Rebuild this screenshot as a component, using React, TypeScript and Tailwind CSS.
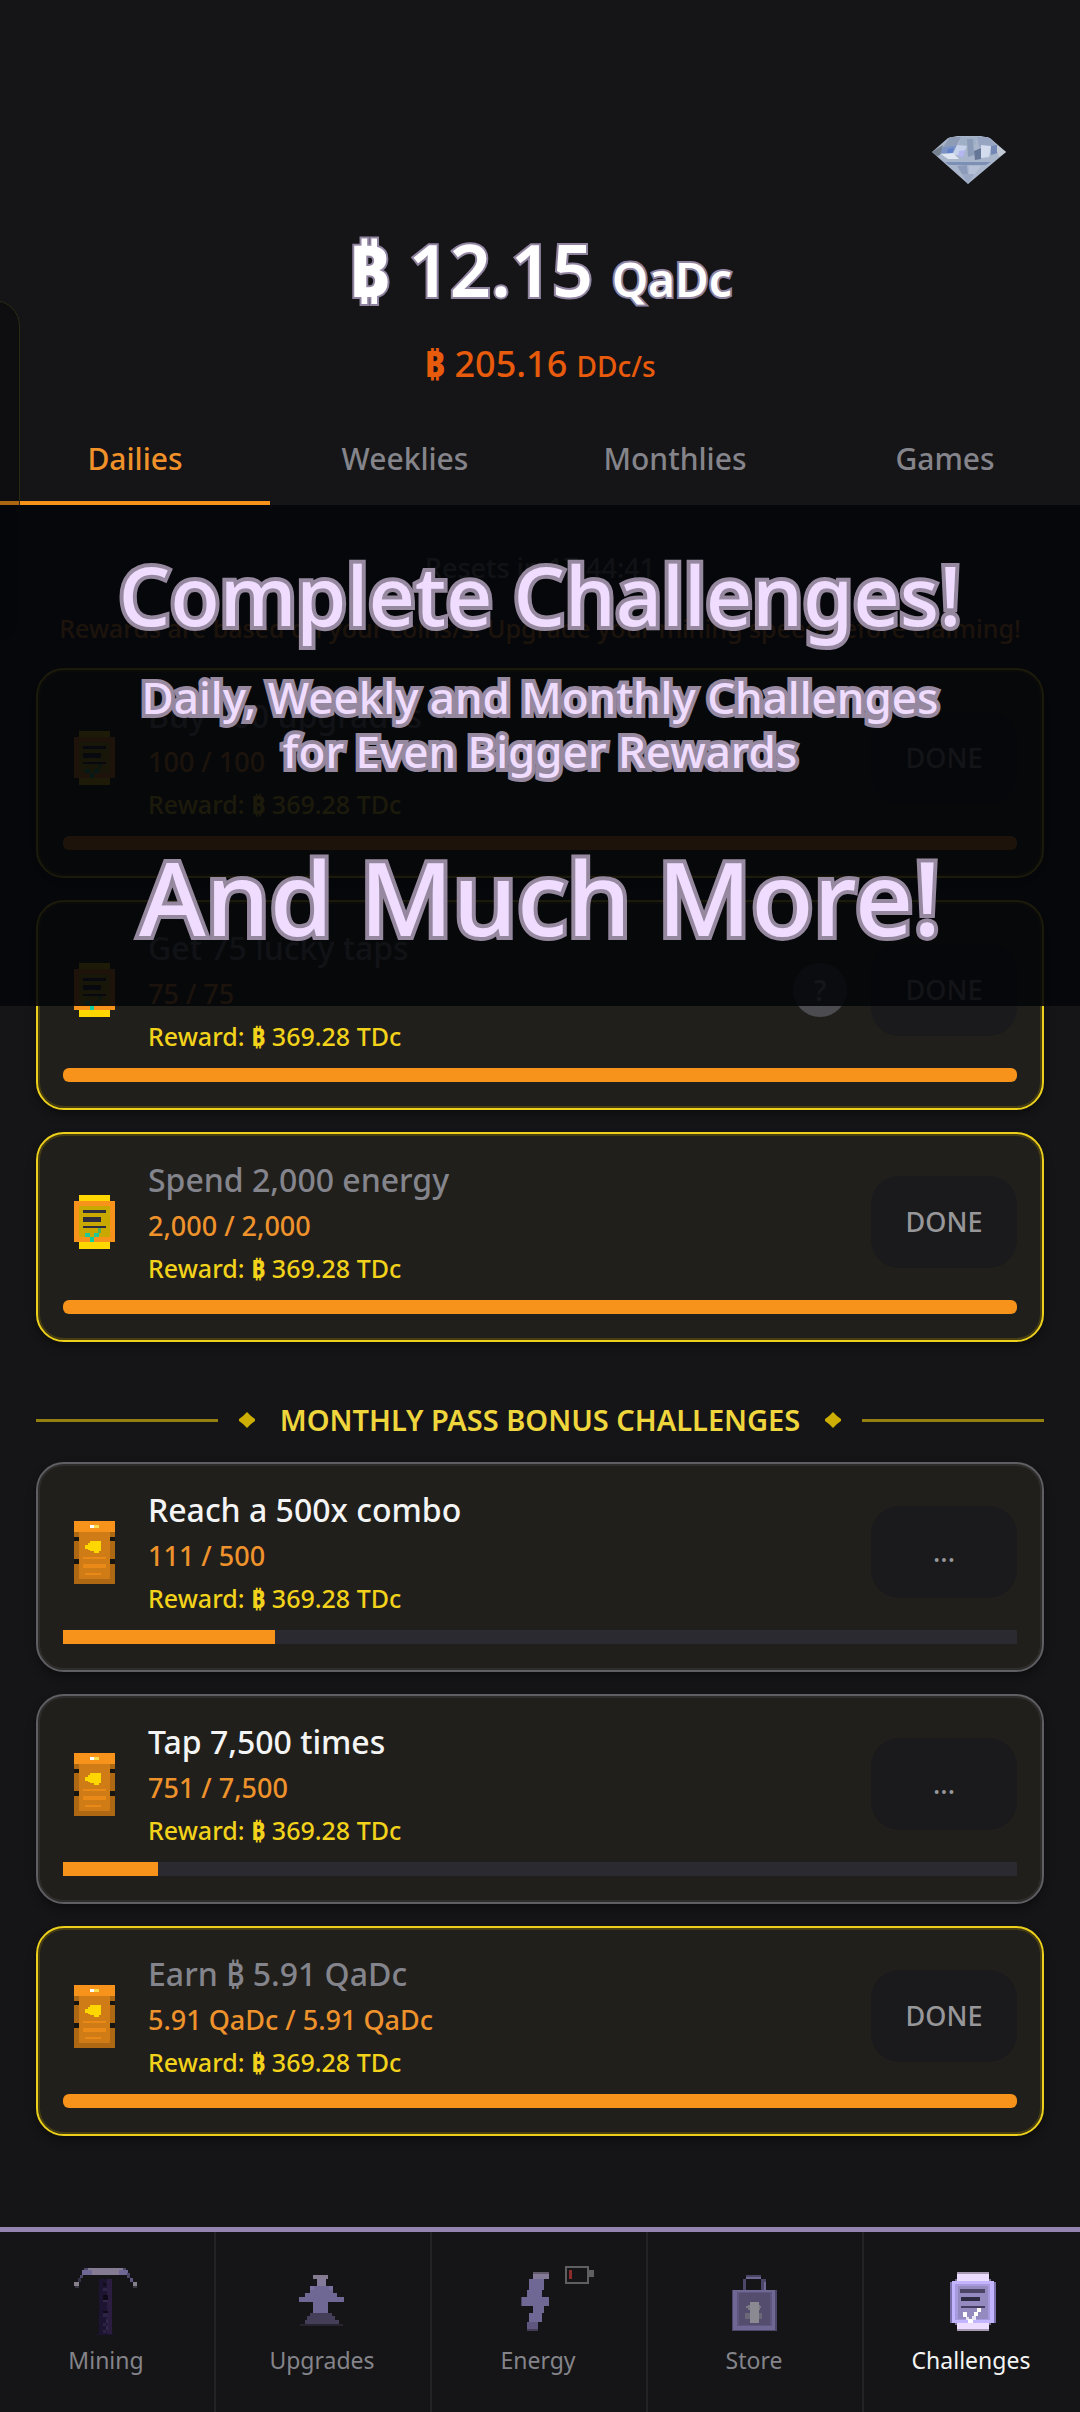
import React from "react";

type Rect = [number, number, number, number, string];

function PixelArt({ w, h, rects, label }: { w: number; h: number; rects: Rect[]; label?: string }) {
  return (
    <svg
      width={w}
      height={h}
      viewBox={`0 0 ${w} ${h}`}
      shapeRendering="crispEdges"
      role={label ? "img" : undefined}
      aria-label={label}
      aria-hidden={label ? undefined : true}
      className="shrink-0"
    >
      {rects.map(([x1, y1, x2, y2, fill], i) => (
        <rect key={i} x={x1} y={y1} width={x2 - x1} height={y2 - y1} fill={fill} />
      ))}
    </svg>
  );
}

const SCROLL: Rect[] = [
  [5, 0, 36, 54, "#ffd700"],
  [0, 6, 41, 47, "#f7931a"],
  [5, 11, 36, 42, "#c9a800"],
  [9, 15, 32, 18, "#2c2c3c"],
  [9, 22, 27, 27, "#2c2c3c"],
  [9, 31, 32, 33, "#2c2c3c"],
  [11, 38, 16, 42, "#1fc894"],
  [16, 42, 20, 47, "#0fd09c"],
  [20, 38, 25, 42, "#1fc894"],
  [24, 33, 27, 38, "#4eb15c"],
];

const BOOK: Rect[] = [
  [0, 0, 41, 63, "#ae6813"],
  [5, 11, 36, 58, "#cf7c17"],
  [0, 0, 41, 11, "#f7931a"],
  [16, 4, 20, 7, "#ffffff"],
  [20, 4, 25, 7, "#ffdf4d"],
  [0, 16, 5, 20, "#15140f"],
  [36, 16, 41, 20, "#15140f"],
  [0, 38, 5, 43, "#15140f"],
  [36, 38, 41, 43, "#15140f"],
  [11, 24, 27, 28, "#ffd700"],
  [14, 22, 27, 29, "#ffd700"],
  [16, 20, 27, 30, "#ffd700"],
  [20, 30, 25, 32, "#ffd700"],
  [9, 36, 32, 38, "#e88918"],
  [9, 43, 32, 47, "#e88918"],
  [11, 52, 27, 54, "#e88918"],
];

const PICKAXE: Rect[] = [
  [14, 2, 56, 4, "#4c4668"],
  [18, 2, 53, 4, "#857b92"],
  [12, 4, 58, 9, "#6f6794"],
  [22, 4, 49, 9, "#857b92"],
  [10, 9, 13, 12, "#4c4668"],
  [8, 12, 11, 16, "#353248"],
  [57, 7, 60, 12, "#4c4668"],
  [60, 12, 63, 16, "#5d5680"],
  [4, 16, 9, 20, "#85808c"],
  [5, 20, 9, 22, "#3a3740"],
  [63, 16, 67, 20, "#85808c"],
  [63, 20, 67, 22, "#3a3740"],
  [29, 13, 42, 69, "#1c1430"],
  [37, 13, 42, 69, "#2a1d40"],
  [33, 17, 36, 20, "#120d1c"],
  [33, 22, 37, 25, "#2c2345"],
  [33, 29, 38, 34, "#0e0a16"],
  [33, 34, 38, 36, "#32294a"],
  [33, 45, 38, 47, "#0e0a16"],
  [33, 47, 38, 51, "#2c2345"],
  [36, 53, 38, 57, "#322a4c"],
  [33, 57, 36, 60, "#2c2345"],
  [36, 60, 38, 64, "#322a4c"],
  [33, 64, 36, 67, "#2c2345"],
  [25, 68, 44, 69, "#1c1430"],
];

const UPGRADE: Rect[] = [
  [27, 9, 42, 13, "#847b90"],
  [31, 13, 40, 20, "#847a9a"],
  [24, 20, 47, 24, "#7a71a0"],
  [28, 20, 43, 27, "#6f6794"],
  [24, 24, 47, 27, "#6f6794"],
  [19, 27, 51, 31, "#6f6794"],
  [13, 31, 58, 36, "#6f6794"],
  [27, 36, 42, 47, "#6f6794"],
  [24, 47, 46, 50, "#453e58"],
  [21, 50, 49, 54, "#453e58"],
  [19, 54, 53, 58, "#453e58"],
  [14, 58, 57, 60, "#28242f"],
];

const BOLT: Rect[] = [
  [31, 6, 47, 8, "#625a6c"],
  [31, 8, 47, 13, "#847a98"],
  [27, 13, 42, 24, "#6f6794"],
  [25, 24, 40, 31, "#6f6794"],
  [19, 31, 22, 40, "#4c4668"],
  [20, 31, 47, 40, "#6f6794"],
  [31, 40, 42, 47, "#6f6794"],
  [27, 47, 40, 56, "#6f6794"],
  [25, 56, 36, 63, "#5f5780"],
  [25, 63, 36, 65, "#423c55"],
];

const STORE: Rect[] = [
  [28, 9, 43, 11, "#4a4462"],
  [28, 11, 43, 13, "#6f6794"],
  [25, 13, 28, 24, "#4c4668"],
  [43, 13, 48, 24, "#4c4668"],
  [46, 16, 48, 24, "#6f6794"],
  [14, 24, 59, 65, "#4c4668"],
  [15, 24, 57, 64, "#6f6794"],
  [19, 26, 54, 60, "#5f5780"],
  [21, 27, 52, 59, "#544d6e"],
  [27, 47, 44, 53, "#6d6878"],
  [28, 40, 43, 42, "#7c7884"],
  [30, 39, 42, 44, "#7c7884"],
  [32, 36, 41, 57, "#8b8a92"],
];

const CHALLENGE: Rect[] = [
  [20, 13, 56, 59, "#7a7192"],
  [22, 6, 54, 65, "#a99bb3"],
  [22, 8, 54, 63, "#ecdcff"],
  [15, 16, 61, 57, "#7a6fa8"],
  [17, 15, 59, 57, "#c3b4ff"],
  [20, 18, 55, 54, "#a99ae0"],
  [23, 20, 53, 53, "#958ac0"],
  [25, 23, 50, 27, "#4b4465"],
  [26, 31, 45, 35, "#2c2a40"],
  [26, 40, 50, 42, "#453e60"],
  [28, 46, 32, 51, "#ffffff"],
  [31, 51, 34, 54, "#e8e4f4"],
  [33, 53, 38, 57, "#ffffff"],
  [37, 50, 41, 54, "#e8e4f4"],
  [39, 46, 43, 50, "#ffffff"],
  [42, 42, 46, 46, "#ffffff"],
];

const BATTERY: Rect[] = [
  [0, 0, 24, 18, "#5f5f61"],
  [2, 2, 22, 16, "#151517"],
  [24, 4, 29, 11, "#5f5f61"],
  [4, 4, 7, 13, "#8c2b2b"],
];

function Diamond() {
  return (
    <svg width="76" height="50" viewBox="0 0 76 50" role="img" aria-label="Diamond">
      <path d="M17 3 L26 1 L50 1 L59 3 L75 17 L37 49 L1 17 Z" fill="#a9b5cb" />
      <path d="M19 2 L30 2 L26 10 L12 12 Z" fill="#8e9bb5" />
      <path d="M30 2 L46 2 L44 10 L28 10 Z" fill="#9fb0c6" />
      <path d="M46 2 L57 2 L66 11 L48 12 Z" fill="#97a5c2" />
      <path d="M12 12 L26 10 L22 20 L8 18 Z" fill="#7d92c4" />
      <path d="M1 17 L12 10 L9 20 L6 21 Z" fill="#75808f" />
      <path d="M26 10 L36 11 L32 20 L21 20 Z" fill="#c6d2ea" />
      <path d="M17 14 L23 13 L21 19 L16 18 Z" fill="#5f7fc8" />
      <path d="M28 16 L34 15 L32 22 L27 21 Z" fill="#b4b6f2" />
      <path d="M10 19 L22 18 L28 24 L17 24 Z" fill="#dfe6f2" />
      <path d="M36 4 L42 4 L43 20 L37 22 Z" fill="#8a9bb8" />
      <path d="M43 16 L50 13 L50 24 L44 25 Z" fill="#667698" />
      <path d="M50 10 L60 11 L58 22 L50 23 Z" fill="#d3dcee" />
      <path d="M60 11 L66 10 L70 17 L60 20 Z" fill="#7388b4" />
      <path d="M66 10 L75 17 L68 22 L66 17 Z" fill="#c3cad6" />
      <path d="M14 27 L60 27 L55 30 L18 30 Z" fill="#7c8fb4" />
      <path d="M26 31 L36 30 L37 40 L31 39 Z" fill="#8d9bbb" />
      <path d="M38 31 L50 31 L43 40 L38 40 Z" fill="#b6c0d6" />
      <path d="M31 39 L43 39 L37 49 Z" fill="#9aa8c4" />
    </svg>
  );
}

type Challenge = {
  title: string;
  progress: string;
  percent: number;
  done: boolean;
  help?: boolean;
};

const DAILY: Challenge[] = [
  { title: "Buy 100 upgrades", progress: "100 / 100", percent: 100, done: true },
  { title: "Get 75 lucky taps", progress: "75 / 75", percent: 100, done: true, help: true },
  { title: "Spend 2,000 energy", progress: "2,000 / 2,000", percent: 100, done: true },
];

const BONUS: Challenge[] = [
  { title: "Reach a 500x combo", progress: "111 / 500", percent: 22.2, done: false },
  { title: "Tap 7,500 times", progress: "751 / 7,500", percent: 10, done: false },
  { title: "Earn ₿ 5.91 QaDc", progress: "5.91 QaDc / 5.91 QaDc", percent: 100, done: true },
];

function Card({ item, rects, iconHeight }: { item: Challenge; rects: Rect[]; iconHeight: number }) {
  return (
    <li
      className={
        item.done
          ? "rounded-[28px] border-2 border-[#edd01c] bg-[#201f1b] px-[25px] pt-[22px] pb-[26px] shadow-[inset_0_0_0_2px_#463d13,0_5px_8px_rgba(0,0,0,0.35)]"
          : "rounded-[28px] border-2 border-[#5f5f63] bg-[#201f1b] px-[25px] pt-[22px] pb-[26px] shadow-[inset_0_0_0_2px_#2e2d2b,0_5px_8px_rgba(0,0,0,0.35)]"
      }
    >
      <div className="flex items-center">
        <div className="mr-[33px] ml-[11px]">
          <PixelArt w={41} h={iconHeight} rects={rects} />
        </div>
        <div className="min-w-0 flex-1">
          <h3
            className={
              item.done
                ? "text-[32px] leading-[48px] font-medium text-[#84848c]"
                : "text-[32px] leading-[48px] font-medium text-[#f4f4f4]"
            }
          >
            {item.title}
          </h3>
          <p className="text-[27px] leading-[44px] font-medium text-[#ee922c]">{item.progress}</p>
          <p className="text-[25px] leading-[40px] font-medium text-[#f2d21a]">
            Reward: <span className="font-bold">₿</span> 369.28 TDc
          </p>
        </div>
        {item.help && (
          <button
            type="button"
            aria-label="Help"
            className="mr-6 size-[54px] rounded-full bg-[#4c4b50] text-[28px] font-medium text-[#b0b0b4]"
          >
            ?
          </button>
        )}
        <button
          type="button"
          className="h-[92px] w-[146px] rounded-[28px] bg-[#1a1a1d] text-[27px] font-medium text-[#97979a]"
        >
          {item.done ? "DONE" : "..."}
        </button>
      </div>
      <div
        role="progressbar"
        aria-label={item.title}
        aria-valuenow={item.percent}
        aria-valuemin={0}
        aria-valuemax={100}
        className={item.done ? "mt-3 h-[14px] overflow-hidden rounded-md bg-[#2b2a30]" : "mt-3 h-[14px] bg-[#2b2a30]"}
      >
        <div className="h-full bg-[#f7931a]" style={{ width: `${item.percent}%` }} />
      </div>
    </li>
  );
}

function Divider() {
  return <span className="h-[3px] flex-1 bg-[#94800f]" />;
}

function Gem() {
  return (
    <svg width="16" height="16" viewBox="0 0 16 16" aria-hidden="true">
      <path d="M8 0 L12 4 L16 7 L16 9 L12 12 L8 16 L4 12 L0 9 L0 7 L4 4 Z" fill="#ccae05" />
    </svg>
  );
}

const TABS = ["Dailies", "Weeklies", "Monthlies", "Games"];

const NAV: { label: string; rects: Rect[] }[] = [
  { label: "Mining", rects: PICKAXE },
  { label: "Upgrades", rects: UPGRADE },
  { label: "Energy", rects: BOLT },
  { label: "Store", rects: STORE },
  { label: "Challenges", rects: CHALLENGE },
];

const OUTLINE =
  "font-medium text-[#efdcff] [-webkit-text-stroke:8px_#95889f] [paint-order:stroke_fill] [stroke-linejoin:round]";

export default function App() {
  return (
    <div className="relative flex min-h-screen flex-col overflow-hidden bg-[#151517] font-['Noto_Sans','Noto_Sans_CJK_SC',sans-serif]">
      <div className="absolute top-[300px] -left-8 h-[344px] w-[52px] rounded-[28px] border border-[#2b2a14] bg-black/30" />

      <header className="pt-[135px]">
        <div className="flex justify-end pr-[73px]">
          <Diamond />
        </div>
        <p className="mt-9 text-center text-[72px] leading-[96px] font-semibold text-white [-webkit-text-stroke:4px_#8f83a0] [paint-order:stroke_fill] [stroke-linejoin:round]">
          <span className="leading-none font-extrabold">₿</span> 12.15{" "}
          <span className="text-[46px] leading-none">QaDc</span>
        </p>
        <p className="mt-[23px] text-center text-[36px] leading-[48px] font-medium text-[#e85a0c]">
          <span className="leading-none font-extrabold">₿</span> 205.16{" "}
          <span className="text-[28px] leading-none">DDc/s</span>
        </p>
      </header>

      <nav aria-label="Challenge periods" className="mt-[23px] grid grid-cols-4">
        {TABS.map((tab, i) => (
          <button
            key={tab}
            type="button"
            className={
              i === 0
                ? "border-b-4 border-[#f7931a] pt-7 pb-[22px] text-[30px] leading-[40px] font-medium text-[#f0912a]"
                : "border-b-4 border-transparent pt-7 pb-[22px] text-[30px] leading-[40px] font-medium text-[#84848a]"
            }
          >
            {tab}
          </button>
        ))}
      </nav>

      <main className="relative px-9 pt-[45px]">
        <p className="text-center text-[27px] leading-[36px] font-medium text-[#84848c]">Resets in 17:44:41</p>
        <p className="mt-[26px] text-center text-[25px] leading-[32px] font-medium whitespace-nowrap text-[#f0902a]">
          Rewards are based on your coins/s. Upgrade your mining speed before claiming!
        </p>

        <ul className="mt-6 flex flex-col gap-[22px]">
          {DAILY.map((item) => (
            <Card key={item.title} item={item} rects={SCROLL} iconHeight={54} />
          ))}
        </ul>

        <div className="mt-[58px] mb-[22px] flex items-center">
          <Divider />
          <span className="mr-[25px] ml-[21px]">
            <Gem />
          </span>
          <h2 className="text-[29px] leading-[40px] font-semibold text-[#efd63c]">MONTHLY PASS BONUS CHALLENGES</h2>
          <span className="mr-[21px] ml-[25px]">
            <Gem />
          </span>
          <Divider />
        </div>

        <ul className="flex flex-col gap-[22px]">
          {BONUS.map((item) => (
            <Card key={item.title} item={item} rects={BOOK} iconHeight={63} />
          ))}
        </ul>

        <section className="absolute inset-x-0 top-0 bg-[#040509]/90 pt-[42px] pb-[49px] text-center">
          <h1 className={`${OUTLINE} text-[81px] leading-[96px]`}>Complete Challenges!</h1>
          <p className={`${OUTLINE} mt-[27px] text-[44px] leading-[54px]`}>
            Daily, Weekly and Monthly Challenges
            <br />
            for Even Bigger Rewards
          </p>
          <p className={`${OUTLINE} mt-[59px] text-[102px] leading-[120px]`}>And Much More!</p>
        </section>
      </main>

      <footer className="mt-auto border-t-[5px] border-[#9384b0]">
        <nav aria-label="Main" className="grid grid-cols-5 divide-x-2 divide-[#232326]">
          {NAV.map(({ label, rects }) => (
            <button key={label} type="button" className="flex flex-col items-center pt-[34px] pr-0.5 pb-9">
              <span className="relative">
                <PixelArt w={72} h={72} rects={rects} />
                {label === "Energy" && (
                  <span className="absolute top-0 left-[63px]">
                    <PixelArt w={29} h={18} rects={BATTERY} label="Low battery" />
                  </span>
                )}
              </span>
              <span
                className={
                  label === "Challenges"
                    ? "mt-1.5 text-[23px] leading-[32px] text-[#f4f4f4]"
                    : "mt-1.5 text-[23px] leading-[32px] text-[#84848a]"
                }
              >
                {label}
              </span>
            </button>
          ))}
        </nav>
      </footer>
    </div>
  );
}
